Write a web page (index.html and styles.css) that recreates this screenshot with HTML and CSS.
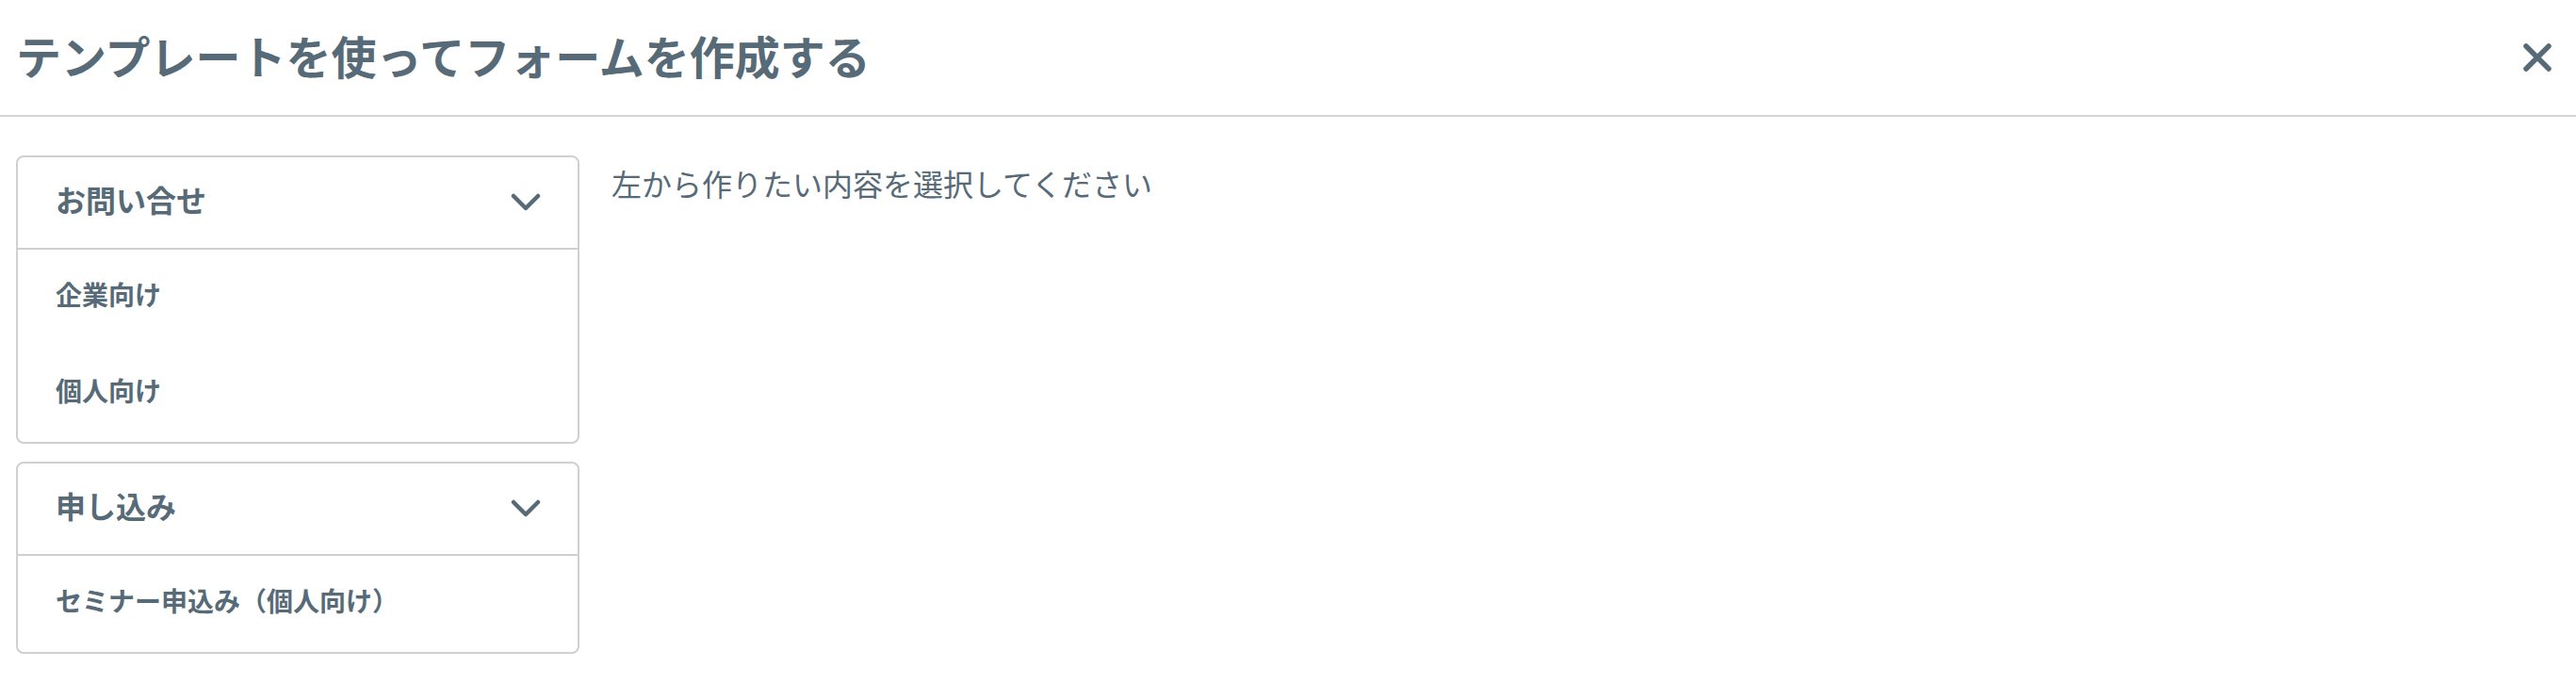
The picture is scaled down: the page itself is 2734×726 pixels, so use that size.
FILE: index.html
```html
<!DOCTYPE html>
<html lang="ja">
<head>
<meta charset="utf-8">
<title>テンプレートを使ってフォームを作成する</title>
<link rel="stylesheet" href="styles.css">
</head>
<body>
<header class="modal-header">
  <h1 class="modal-title">テンプレートを使ってフォームを作成する</h1>
  <button class="close-btn" aria-label="閉じる">
    <svg width="30" height="30" viewBox="0 0 30 30"><path d="M3 3 L27 27 M27 3 L3 27" stroke="#576a77" stroke-width="5.5" stroke-linecap="round" fill="none"/></svg>
  </button>
</header>
<main class="modal-body">
  <nav class="categories">
    <section class="category">
      <div class="category-head">
        <span>お問い合せ</span>
        <svg class="chevron" width="32" height="20" viewBox="0 0 32 20"><path d="M3 3 L16 16 L29 3" stroke="#576a77" stroke-width="4.5" stroke-linecap="round" stroke-linejoin="round" fill="none"/></svg>
      </div>
      <ul class="category-items">
        <li>企業向け</li>
        <li>個人向け</li>
      </ul>
    </section>
    <section class="category">
      <div class="category-head">
        <span>申し込み</span>
        <svg class="chevron" width="32" height="20" viewBox="0 0 32 20"><path d="M3 3 L16 16 L29 3" stroke="#576a77" stroke-width="4.5" stroke-linecap="round" stroke-linejoin="round" fill="none"/></svg>
      </div>
      <ul class="category-items">
        <li>セミナー申込み（個人向け）</li>
      </ul>
    </section>
  </nav>
  <p class="hint">左から作りたい内容を選択してください</p>
</main>
</body>
</html>
```

FILE: styles.css
```css
* { box-sizing: border-box; }
html, body { margin: 0; padding: 0; background: #fff; }
body {
  font-family: "Noto Sans CJK JP", "Noto Sans", sans-serif;
  color: #576a77;
}
.modal-header {
  height: 124px;
  display: flex;
  align-items: center;
  justify-content: space-between;
  padding: 0 26px 0 17px;
  border-bottom: 2px solid #d4d4d4;
}
.modal-title {
  margin: 0 0 6px 0;
  font-size: 48px;
  font-weight: 700;
  line-height: 1;
}
.close-btn {
  border: 0;
  background: none;
  padding: 0;
  width: 30px;
  height: 30px;
  display: flex;
}
.modal-body {
  display: flex;
  align-items: flex-start;
  gap: 34px;
  padding: 41px 17px 0 17px;
}
.categories {
  width: 598px;
  display: flex;
  flex-direction: column;
  gap: 19px;
}
.category {
  border: 2px solid #d0d0d0;
  border-radius: 8px;
}
.category-head {
  height: 98px;
  display: flex;
  align-items: center;
  justify-content: space-between;
  padding: 0 39px 0 40px;
  border-bottom: 2px solid #d0d0d0;
  font-size: 32px;
  font-weight: 700;
}
.category-head span { padding-bottom: 8px; }
.chevron { display: block; }
.category-items {
  list-style: none;
  margin: 0;
  padding: 0;
}
.category-items li {
  height: 102px;
  display: flex;
  align-items: center;
  padding: 0 0 8px 40px;
  font-size: 28px;
  font-weight: 700;
}
.hint {
  margin: 0;
  padding-top: 5px;
  font-size: 32px;
  line-height: 48px;
}
```
